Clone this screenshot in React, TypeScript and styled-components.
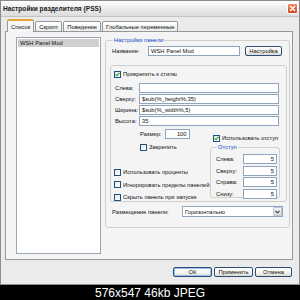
import styled, { createGlobalStyle } from "styled-components";

const GlobalStyle = createGlobalStyle`
  html, body { margin: 0; padding: 0; background: #000; }
  body {
    width: 300px;
    height: 300px;
    overflow: hidden;
    font-family: "Liberation Sans", Arial, sans-serif;
    font-size: 5.8px;
    color: #111;
  }
`;

const Page = styled.div`
  width: 300px;
  height: 300px;
  display: flex;
  flex-direction: column;
  background: #000;
`;

const Window = styled.div`
  height: 285px;
  box-sizing: border-box;
  border: 1px solid #8c8c8c;
  background: #ebebeb;
  display: flex;
  flex-direction: column;
`;

const TitleBar = styled.div`
  height: 16px;
  flex: none;
  box-sizing: border-box;
  display: flex;
  align-items: center;
  justify-content: space-between;
  padding: 0 1px 0 2px;
  background: linear-gradient(#fdfdfd, #ececec 50%, #dcdcdc);
  border-bottom: 1px solid #c4c4c4;
`;

const Title = styled.div`
  font-size: 6.6px;
  font-weight: bold;
  color: #1a1a1a;
`;

const CloseButton = styled.div`
  width: 11px;
  height: 11px;
  box-sizing: border-box;
  border: 1px solid #fff;
  border-radius: 2px;
  background: linear-gradient(#f08a6c, #d2401c);
  display: flex;
  align-items: center;
  justify-content: center;
`;

const Body = styled.div`
  flex: 1;
  display: flex;
  flex-direction: column;
  padding: 3px 6px 0 4px;
`;

const TabRow = styled.div`
  display: flex;
  align-items: flex-end;
  height: 12px;
  padding-left: 2px;
  margin-bottom: -1px;
`;

const Tab = styled.div<{ $active?: boolean }>`
  position: relative;
  box-sizing: border-box;
  height: ${(p) => (p.$active ? 13 : 11)}px;
  padding: 0 3px;
  margin-right: 1px;
  display: flex;
  align-items: center;
  border: 1px solid #919b9c;
  border-bottom: ${(p) => (p.$active ? "none" : "1px solid #919b9c")};
  border-radius: 2px 2px 0 0;
  background: ${(p) => (p.$active ? "#f6f6f6" : "linear-gradient(#ffffff, #ececec)")};
  border-top: ${(p) => (p.$active ? "2px solid #e8a33a" : "1px solid #919b9c")};
  z-index: ${(p) => (p.$active ? 1 : 0)};
`;

const TabPanel = styled.div`
  height: 229px;
  box-sizing: border-box;
  border: 1px solid #919b9c;
  background: #f4f4f4;
  display: flex;
  align-items: flex-start;
  padding: 5px 0 0 10px;
  gap: 4px;
`;

const List = styled.div`
  width: 85px;
  height: 217px;
  box-sizing: border-box;
  border: 1px solid #9aa6b4;
  background: #fff;
  padding: 1px;
`;

const ListItem = styled.div<{ $selected?: boolean }>`
  height: 8px;
  line-height: 8px;
  padding-left: 2px;
  background: ${(p) => (p.$selected ? "#cfcfcf" : "transparent")};
`;

const Group = styled.fieldset<{ $width: number; $height: number }>`
  width: ${(p) => p.$width}px;
  height: ${(p) => p.$height}px;
  box-sizing: border-box;
  margin: 0;
  border: 1px solid #d0d0c8;
  border-radius: 3px;
  display: flex;
  flex-direction: column;
`;

const Legend = styled.legend`
  color: #0b46c8;
  padding: 0 1px;
  margin-left: 1px;
  line-height: 7px;
`;

const MainGroup = styled(Group)`
  padding: 2px 2px 0 6px;
  margin-top: 0;
`;

const Row = styled.div<{ $gap?: number }>`
  display: flex;
  align-items: center;
  height: 10px;
  gap: ${(p) => p.$gap ?? 0}px;
`;

const Label = styled.span<{ $width?: number; $right?: boolean }>`
  width: ${(p) => (p.$width ? `${p.$width}px` : "auto")};
  flex: none;
  text-align: ${(p) => (p.$right ? "right" : "left")};
  white-space: nowrap;
`;

const Input = styled.div<{ $width: number; $right?: boolean }>`
  width: ${(p) => p.$width}px;
  height: 10px;
  box-sizing: border-box;
  border: 1px solid #8ea4bf;
  background: #fff;
  line-height: 8px;
  padding: 0 2px;
  text-align: ${(p) => (p.$right ? "right" : "left")};
  white-space: nowrap;
  overflow: hidden;
`;

const Button = styled.div<{ $width: number; $default?: boolean }>`
  width: ${(p) => p.$width}px;
  height: 10px;
  box-sizing: border-box;
  border: 1px solid #2b4d7a;
  border-radius: 2px;
  background: linear-gradient(#ffffff, #f0f0ea 70%, #d8d6cc);
  box-shadow: ${(p) => (p.$default ? "inset 0 0 0 1px #9cc0ee" : "none")};
  display: flex;
  align-items: center;
  justify-content: center;
  white-space: nowrap;
`;

const StyleGroup = styled.div`
  margin: 9px 0 0 -2px;
  width: 177px;
  height: 137px;
  box-sizing: border-box;
  border: 1px solid #d0d0c8;
  border-radius: 3px;
  padding: 4px 0 0 3px;
  display: flex;
  flex-direction: column;
`;

const CheckRow = styled.label`
  display: flex;
  align-items: center;
  gap: 2px;
  height: 8px;
  white-space: nowrap;
`;

const Box = styled.span`
  width: 7px;
  height: 7px;
  box-sizing: border-box;
  border: 1px solid #1c5180;
  background: linear-gradient(135deg, #e6e6e0, #ffffff);
  display: flex;
  align-items: center;
  justify-content: center;
  flex: none;
`;

const Fields = styled.div`
  display: flex;
  flex-direction: column;
  gap: 1px;
  margin-top: 5px;
  padding-left: 1px;
`;

const Lower = styled.div`
  display: flex;
  margin-top: 3px;
`;

const LeftCol = styled.div`
  width: 96px;
  flex: none;
  display: flex;
  flex-direction: column;
`;

const RightCol = styled.div`
  display: flex;
  flex-direction: column;
  padding-top: 5px;
`;

const Indent = styled.div<{ $left: number; $top?: number }>`
  padding-left: ${(p) => p.$left}px;
  margin-top: ${(p) => p.$top ?? 0}px;
`;

const CheckList = styled.div`
  display: flex;
  flex-direction: column;
  gap: 4.5px;
  margin-top: 17px;
`;

const OffsetGroup = styled(Group)`
  padding: 3px 2px 0 5px;
  margin-top: 2px;
  gap: 1.5px;
`;

const Select = styled.div`
  width: 101px;
  height: 11px;
  box-sizing: border-box;
  border: 1px solid #8ea4bf;
  background: #fff;
  display: flex;
  align-items: center;
  padding-left: 2px;
`;

const SelectText = styled.span`
  flex: 1;
`;

const SelectArrow = styled.span`
  width: 9px;
  height: 9px;
  box-sizing: border-box;
  border: 1px solid #b8c4d6;
  border-radius: 1px;
  background: linear-gradient(#f4f4f4, #d8d8d8);
  display: flex;
  align-items: center;
  justify-content: center;
`;

const ButtonBar = styled.div`
  display: flex;
  justify-content: flex-end;
  gap: 2px;
  margin-top: 7px;
  padding-right: 1px;
`;

const Caption = styled.div`
  flex: 1;
  display: flex;
  align-items: center;
  justify-content: center;
  color: #fff;
  font-family: "Liberation Sans", Arial, sans-serif;
  font-size: 12px;
`;

function Check({ checked, children }: { checked?: boolean; children: string }) {
  return (
    <CheckRow>
      <Box>
        {checked && (
          <svg width="5" height="5" viewBox="0 0 5 5">
            <path d="M0.6 2.4 L2 3.8 L4.4 0.8" stroke="#21a121" strokeWidth="1.1" fill="none" />
          </svg>
        )}
      </Box>
      {children}
    </CheckRow>
  );
}

export default function App() {
  return (
    <Page>
      <GlobalStyle />
      <Window>
        <TitleBar>
          <Title>Настройки разделителя (PSS)</Title>
          <CloseButton>
            <svg width="7" height="7" viewBox="0 0 7 7">
              <path d="M1 1 L6 6 M6 1 L1 6" stroke="#fff" strokeWidth="1.4" />
            </svg>
          </CloseButton>
        </TitleBar>
        <Body>
          <TabRow>
            <Tab $active>Список</Tab>
            <Tab>Скрипт</Tab>
            <Tab>Поведение</Tab>
            <Tab>Глобальные переменные</Tab>
          </TabRow>
          <TabPanel>
            <List>
              <ListItem $selected>WSH Panel Mod</ListItem>
            </List>
            <MainGroup $width={185} $height={191}>
              <Legend>Настройки панели</Legend>
              <Row>
                <Label $width={36}>Название:</Label>
                <Input $width={92}>WSH Panel Mod</Input>
                <Button $width={37} style={{ marginLeft: 5 }}>Настройка</Button>
              </Row>
              <StyleGroup>
                <Check checked>Прикрепить к стилю</Check>
                <Fields>
                  <Row>
                    <Label $width={24}>Слева:</Label>
                    <Input $width={140}></Input>
                  </Row>
                  <Row>
                    <Label $width={24}>Сверху:</Label>
                    <Input $width={140}>$sub(%_height%,35)</Input>
                  </Row>
                  <Row>
                    <Label $width={24}>Ширина:</Label>
                    <Input $width={140}>$sub(%_width%,5)</Input>
                  </Row>
                  <Row>
                    <Label $width={24}>Высота:</Label>
                    <Input $width={140}>35</Input>
                  </Row>
                </Fields>
                <Lower>
                  <LeftCol>
                    <Indent $left={26}>
                      <Row $gap={3}>
                        <Label>Размер:</Label>
                        <Input $width={25} $right>100</Input>
                      </Row>
                    </Indent>
                    <Indent $left={26} $top={4}>
                      <Check>Закрепить</Check>
                    </Indent>
                    <CheckList>
                      <Check>Использовать проценты</Check>
                      <Check>Игнорировать пределы панелей</Check>
                      <Check>Скрыть панель при запуске</Check>
                    </CheckList>
                  </LeftCol>
                  <RightCol>
                    <Indent $left={3}>
                      <Check checked>Использовать отступ</Check>
                    </Indent>
                    <OffsetGroup $width={70} $height={54}>
                      <Legend>Отступ</Legend>
                      {["Слева:", "Сверху:", "Справа:", "Снизу:"].map((l) => (
                        <Row key={l}>
                          <Label $width={27}>{l}</Label>
                          <Input $width={34} $right>5</Input>
                        </Row>
                      ))}
                    </OffsetGroup>
                  </RightCol>
                </Lower>
              </StyleGroup>
              <Row style={{ marginTop: 4, height: 11 }}>
                <Label $width={70}>Размещение панели:</Label>
                <Select>
                  <SelectText>Горизонтально</SelectText>
                  <SelectArrow>
                    <svg width="5" height="4" viewBox="0 0 5 4">
                      <path d="M0.5 0.8 L2.5 2.8 L4.5 0.8" stroke="#333" strokeWidth="1.1" fill="none" />
                    </svg>
                  </SelectArrow>
                </Select>
              </Row>
            </MainGroup>
          </TabPanel>
          <ButtonBar>
            <Button $width={39} $default>ОК</Button>
            <Button $width={39}>Применить</Button>
            <Button $width={37}>Отмена</Button>
          </ButtonBar>
        </Body>
      </Window>
      <Caption>576x547 46kb JPEG</Caption>
    </Page>
  );
}
